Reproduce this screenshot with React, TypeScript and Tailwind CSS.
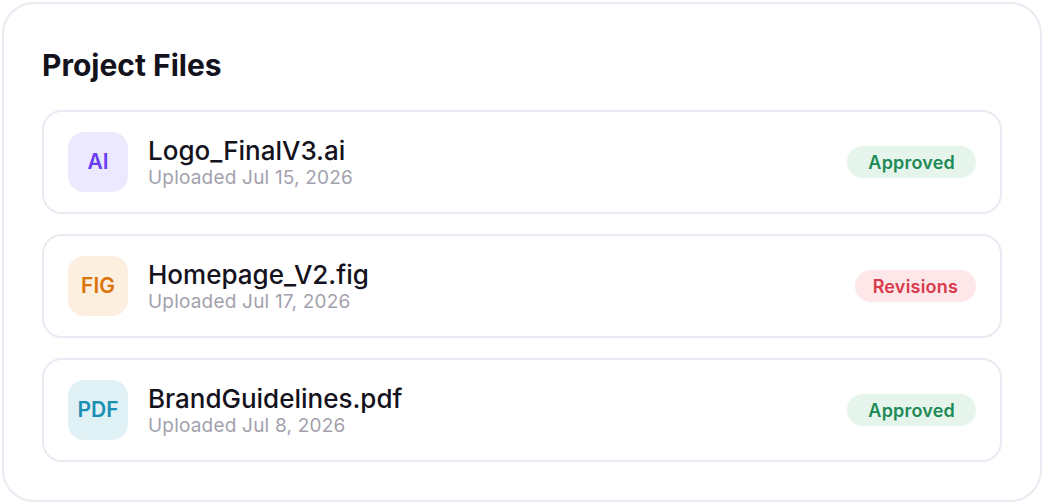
const files = [
  {
    ext: "AI",
    name: "Logo_FinalV3.ai",
    date: "Uploaded Jul 15, 2026",
    status: "Approved",
    iconBox: "bg-[#ece8fe] text-[#6a3ef0]",
  },
  {
    ext: "FIG",
    name: "Homepage_V2.fig",
    date: "Uploaded Jul 17, 2026",
    status: "Revisions",
    iconBox: "bg-[#fcefdf] text-[#d9730a]",
  },
  {
    ext: "PDF",
    name: "BrandGuidelines.pdf",
    date: "Uploaded Jul 8, 2026",
    status: "Approved",
    iconBox: "bg-[#e0f1f6] text-[#1a8fb3]",
  },
];

function StatusBadge({ status }: { status: string }) {
  const approved = status === "Approved";
  return (
    <span
      className={
        approved
          ? "h-8 px-[21px] rounded-full flex items-center text-[18px] font-semibold tracking-[0.2px] bg-[#e5f5ec] text-[#1d8a55]"
          : "h-8 px-[18px] rounded-full flex items-center text-[18px] font-semibold tracking-[0.2px] bg-[#fde7e9] text-[#d83a4b]"
      }
    >
      {status}
    </span>
  );
}

export default function App() {
  return (
    <div
      className="bg-white w-[1044px] h-[504px] p-[2px]"
      style={{ fontFamily: "Inter, 'Noto Sans', sans-serif" }}
    >
      <div className="h-[500px] border-2 border-[#ebeaf2] rounded-[32px] p-[38px] bg-white">
        <h2 className="pt-[5px] text-[30px] leading-[36px] font-bold text-[#14121c] mb-[27px]">
          Project Files
        </h2>
        <div className="flex flex-col gap-5">
          {files.map((f) => (
            <div
              key={f.name}
              className="border-2 border-[#ebeaf2] rounded-[20px] px-6 py-5 flex items-center justify-between"
            >
              <div className="flex items-center gap-5">
                <div
                  className={`w-[60px] h-[60px] rounded-2xl flex items-center justify-center text-[21px] font-semibold ${f.iconBox}`}
                >
                  {f.ext}
                </div>
                <div className="flex flex-col pt-[2px]">
                  <span className="text-[26px] leading-[30px] font-medium text-[#14121c]">
                    {f.name}
                  </span>
                  <span className="text-[19px] leading-[24px] tracking-[0.2px] text-[#a3a1ad]">
                    {f.date}
                  </span>
                </div>
              </div>
              <StatusBadge status={f.status} />
            </div>
          ))}
        </div>
      </div>
    </div>
  );
}
